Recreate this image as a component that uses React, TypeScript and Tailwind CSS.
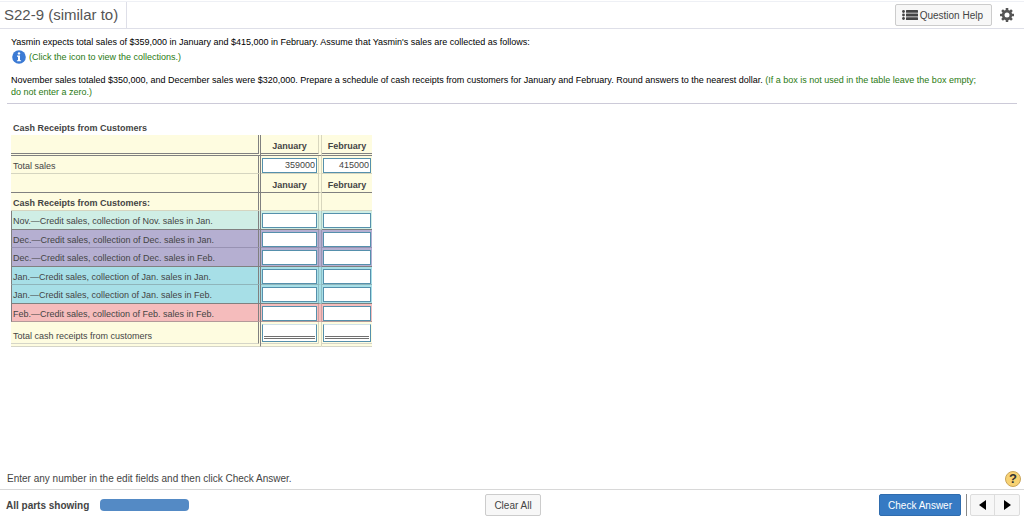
import { ReactNode } from "react";

type Row = {
  label: string;
  bg: string;
  line: string;
  height: string;
};

const rows: Row[] = [
  { label: "Nov.—Credit sales, collection of Nov. sales in Jan.", bg: "bg-[#cfeee5]", line: "border-b-[#808080]", height: "h-[19px]" },
  { label: "Dec.—Credit sales, collection of Dec. sales in Jan.", bg: "bg-[#b5afd1]", line: "border-b-[#9892b3]", height: "h-[18px]" },
  { label: "Dec.—Credit sales, collection of Dec. sales in Feb.", bg: "bg-[#b5afd1]", line: "border-b-[#808080]", height: "h-[19px]" },
  { label: "Jan.—Credit sales, collection of Jan. sales in Jan.", bg: "bg-[#a7dfe7]", line: "border-b-[#8fb5bb]", height: "h-[18px]" },
  { label: "Jan.—Credit sales, collection of Jan. sales in Feb.", bg: "bg-[#a7dfe7]", line: "border-b-[#808080]", height: "h-[19px]" },
  { label: "Feb.—Credit sales, collection of Feb. sales in Feb.", bg: "bg-[#f5bcbc]", line: "border-b-[#b39a9a]", height: "h-[18px]" },
];

const labelEdge = "border-r-[3px] border-r-[#808080] [border-right-style:double]";
const monthEdge = "border-r-4 border-r-black/15 [border-right-style:double]";

function AmountInput({ label, value }: { label: string; value?: string }) {
  return (
    <input
      type="text"
      aria-label={label}
      defaultValue={value}
      className="block h-[15px] w-full border border-[#5590ac] bg-white px-px text-right text-[9px] leading-none text-[#444]"
    />
  );
}

function TotalInput({ label }: { label: string }) {
  return (
    <div className="h-[18px] border border-t-[#cfe2ea] border-[#5590ac] bg-white px-px">
      <input
        type="text"
        aria-label={label}
        className="block h-[14px] w-full border-b-[3px] border-double border-[#707070] bg-white text-right text-[9px] leading-none"
      />
    </div>
  );
}

function MonthHeads({ line }: { line: string }) {
  return (
    <>
      <th scope="col" className={`${line} ${monthEdge} text-center font-bold`}>January</th>
      <th scope="col" className={`${line} text-center font-bold`}>February</th>
    </>
  );
}

function Note({ children }: { children: ReactNode }) {
  return <span className="text-[#2a7a12]">{children}</span>;
}

function ScheduleTable() {
  return (
    <table className="w-[361px] table-fixed border-separate border-spacing-0 bg-[#fefce0] text-[9px] leading-3 text-[#444]">
      <caption className="bg-white pb-px pl-0.5 text-left font-bold">Cash Receipts from Customers</caption>
      <colgroup>
        <col className="w-[250px]" />
        <col className="w-[61px]" />
        <col className="w-[50px]" />
      </colgroup>
      <thead>
        <tr className="h-[21px]">
          <td className={`border-b-[3px] border-b-[#808080] [border-bottom-style:double] ${labelEdge}`} />
          <MonthHeads line="border-b-[3px] border-b-[#808080] pt-1 [border-bottom-style:double]" />
        </tr>
      </thead>
      <tbody>
        <tr className="h-[18px]">
          <th scope="row" className={`border-b border-b-[#d5d5c0] pt-0.5 pl-0.5 text-left font-normal ${labelEdge}`}>Total sales</th>
          <td className={`border-b border-b-[#d5d5c0] px-px pt-px ${monthEdge}`}>
            <AmountInput label="Total sales, January" value="359000" />
          </td>
          <td className="border-b border-b-[#d5d5c0] px-px pt-px">
            <AmountInput label="Total sales, February" value="415000" />
          </td>
        </tr>
        <tr className="h-[19px]">
          <td className={`border-b border-b-[#808080] ${labelEdge}`} />
          <MonthHeads line="border-b border-b-[#808080] pt-1" />
        </tr>
        <tr className="h-[18px]">
          <th scope="row" className={`border-b border-b-[#d5d5c0] pt-0.5 pl-0.5 text-left font-bold ${labelEdge}`}>
            Cash Receipts from Customers:
          </th>
          <td className={`border-b border-b-[#d5d5c0] ${monthEdge}`} />
          <td className="border-b border-b-[#d5d5c0]" />
        </tr>
        {rows.map((row) => (
          <tr key={row.label} className={`${row.height} ${row.bg}`}>
            <th
              scope="row"
              className={`border-b border-l border-l-[#808080] pt-0.5 pl-px text-left font-normal whitespace-nowrap ${row.line} ${labelEdge}`}
            >
              {row.label}
            </th>
            <td className={`border-b px-px pt-px ${row.line} ${monthEdge}`}>
              <AmountInput label={`${row.label} January`} />
            </td>
            <td className={`border-b px-px pt-px ${row.line}`}>
              <AmountInput label={`${row.label} February`} />
            </td>
          </tr>
        ))}
        <tr className="h-[25px]">
          <th
            scope="row"
            className={`border-b-4 border-b-[#d5d5c8] pt-1.5 pl-0.5 text-left font-normal [border-bottom-style:double] ${labelEdge}`}
          >
            Total cash receipts from customers
          </th>
          <td className={`border-b-4 border-b-[#d5d5c8] px-px [border-bottom-style:double] ${monthEdge}`}>
            <TotalInput label="Total cash receipts, January" />
          </td>
          <td className="border-b-4 border-b-[#d5d5c8] px-px [border-bottom-style:double]">
            <TotalInput label="Total cash receipts, February" />
          </td>
        </tr>
      </tbody>
    </table>
  );
}

function ListIcon() {
  return (
    <svg width="16" height="10" viewBox="0 0 16 10" fill="#444" aria-hidden="true">
      <circle cx="1.5" cy="1.5" r="1.4" />
      <circle cx="1.5" cy="5" r="1.4" />
      <circle cx="1.5" cy="8.5" r="1.4" />
      <rect x="4" y="0" width="12" height="2.8" rx="0.5" />
      <rect x="4" y="3.6" width="12" height="2.8" rx="0.5" />
      <rect x="4" y="7.2" width="12" height="2.8" rx="0.5" />
    </svg>
  );
}

function GearIcon() {
  return (
    <svg width="14" height="14" viewBox="0 0 14 14" fill="#555" aria-hidden="true">
      {[0, 45, 90, 135].map((angle) => (
        <rect key={angle} x="5.7" y="0" width="2.6" height="14" rx="0.4" transform={`rotate(${angle} 7 7)`} />
      ))}
      <circle cx="7" cy="7" r="5.2" />
      <circle cx="7" cy="7" r="2.5" fill="#fff" />
    </svg>
  );
}

function InfoIcon() {
  return (
    <svg width="14" height="14" viewBox="0 0 14 14" aria-hidden="true">
      <circle cx="7" cy="7" r="6.8" fill="#3b7ad4" />
      <circle cx="7" cy="3.4" r="1.2" fill="#fff" />
      <path d="M5 5.6h3v4.6h1.1v1.1H4.9v-1.1H6V6.7H5z" fill="#fff" />
    </svg>
  );
}

export default function App() {
  return (
    <div className="flex min-h-screen flex-col bg-white font-['Liberation_Sans',Arial,sans-serif] text-[#444]">
      <header className="mt-px flex h-7 items-stretch justify-between border-t border-b border-t-[#eef0f5] border-b-[#dedfe8]">
        <h1 className="flex w-[127px] items-center border-r border-[#dedfe8] pl-1 text-[15px] whitespace-nowrap text-[#555]">
          S22-9 (similar to)
        </h1>
        <div className="flex items-center gap-2 pr-2.5">
          <button type="button" className="flex h-[22px] items-center gap-0.5 rounded-xs border border-[#ccc] bg-[#f7f7f7] pr-2 pl-1.5 text-[10px]">
            <ListIcon />
            Question Help
          </button>
          <button type="button" aria-label="Settings">
            <GearIcon />
          </button>
        </div>
      </header>

      <section className="mx-[7px] border-b border-[#cccad8] pt-[7px] pr-9 pb-[5px] pl-1 text-[9px] leading-3 text-black">
        <p>
          Yasmin expects total sales of $359,000 in January and $415,000 in February. Assume that Yasmin's sales are collected as follows:
        </p>
        <button type="button" className="mt-0.5 ml-px flex items-center gap-[3px]">
          <InfoIcon />
          <Note>(Click the icon to view the collections.)</Note>
        </button>
        <p className="mt-2.5">
          November sales totaled $350,000, and December sales were $320,000. Prepare a schedule of cash receipts from customers for January and February. Round answers to the nearest dollar.{" "}
          <Note>(If a box is not used in the table leave the box empty; do not enter a zero.)</Note>
        </p>
      </section>

      <main className="flex-1 pt-[18px] pl-[11px]">
        <ScheduleTable />
      </main>

      <div className="flex h-5 items-center justify-between pr-[3px] pl-[7px]">
        <p className="text-[10px] leading-4">Enter any number in the edit fields and then click Check Answer.</p>
        <button
          type="button"
          aria-label="Help"
          className="size-4 rounded-full border border-[#c9a55a] bg-[#f8d374] text-[13px] leading-3 font-bold text-[#333]"
        >
          ?
        </button>
      </div>

      <footer className="grid h-[31px] grid-cols-[1fr_auto_1fr] items-center border-t border-[#d8d8d8] pr-1 pl-1.5">
        <div className="flex items-center gap-[11px]">
          <span className="text-[10px] font-bold">All parts showing</span>
          <div className="h-3 w-[89px] rounded bg-[#548ac5]" />
        </div>
        <button type="button" className="h-[22px] rounded-xs border border-[#ccc] bg-[#f7f7f7] px-2 text-[10px]">
          Clear All
        </button>
        <div className="flex items-center justify-end">
          <button type="button" className="h-[22px] rounded-xs border border-[#2f6cae] bg-[#367ac3] px-2 text-[10px] text-white">
            Check Answer
          </button>
          <div className="mr-[3px] ml-[5px] h-[22px] w-px bg-[#888]" />
          <div className="flex h-[22px] divide-x divide-[#ddd] rounded-xs border border-[#ddd] bg-[#f7f7f7]">
            <button type="button" aria-label="Previous" className="flex w-6 items-center justify-center">
              <svg width="7" height="10" viewBox="0 0 7 10" aria-hidden="true"><path d="M7 0v10L0 5z" /></svg>
            </button>
            <button type="button" aria-label="Next" className="flex w-6 items-center justify-center">
              <svg width="7" height="10" viewBox="0 0 7 10" aria-hidden="true"><path d="M0 0v10l7-5z" /></svg>
            </button>
          </div>
        </div>
      </footer>
    </div>
  );
}
